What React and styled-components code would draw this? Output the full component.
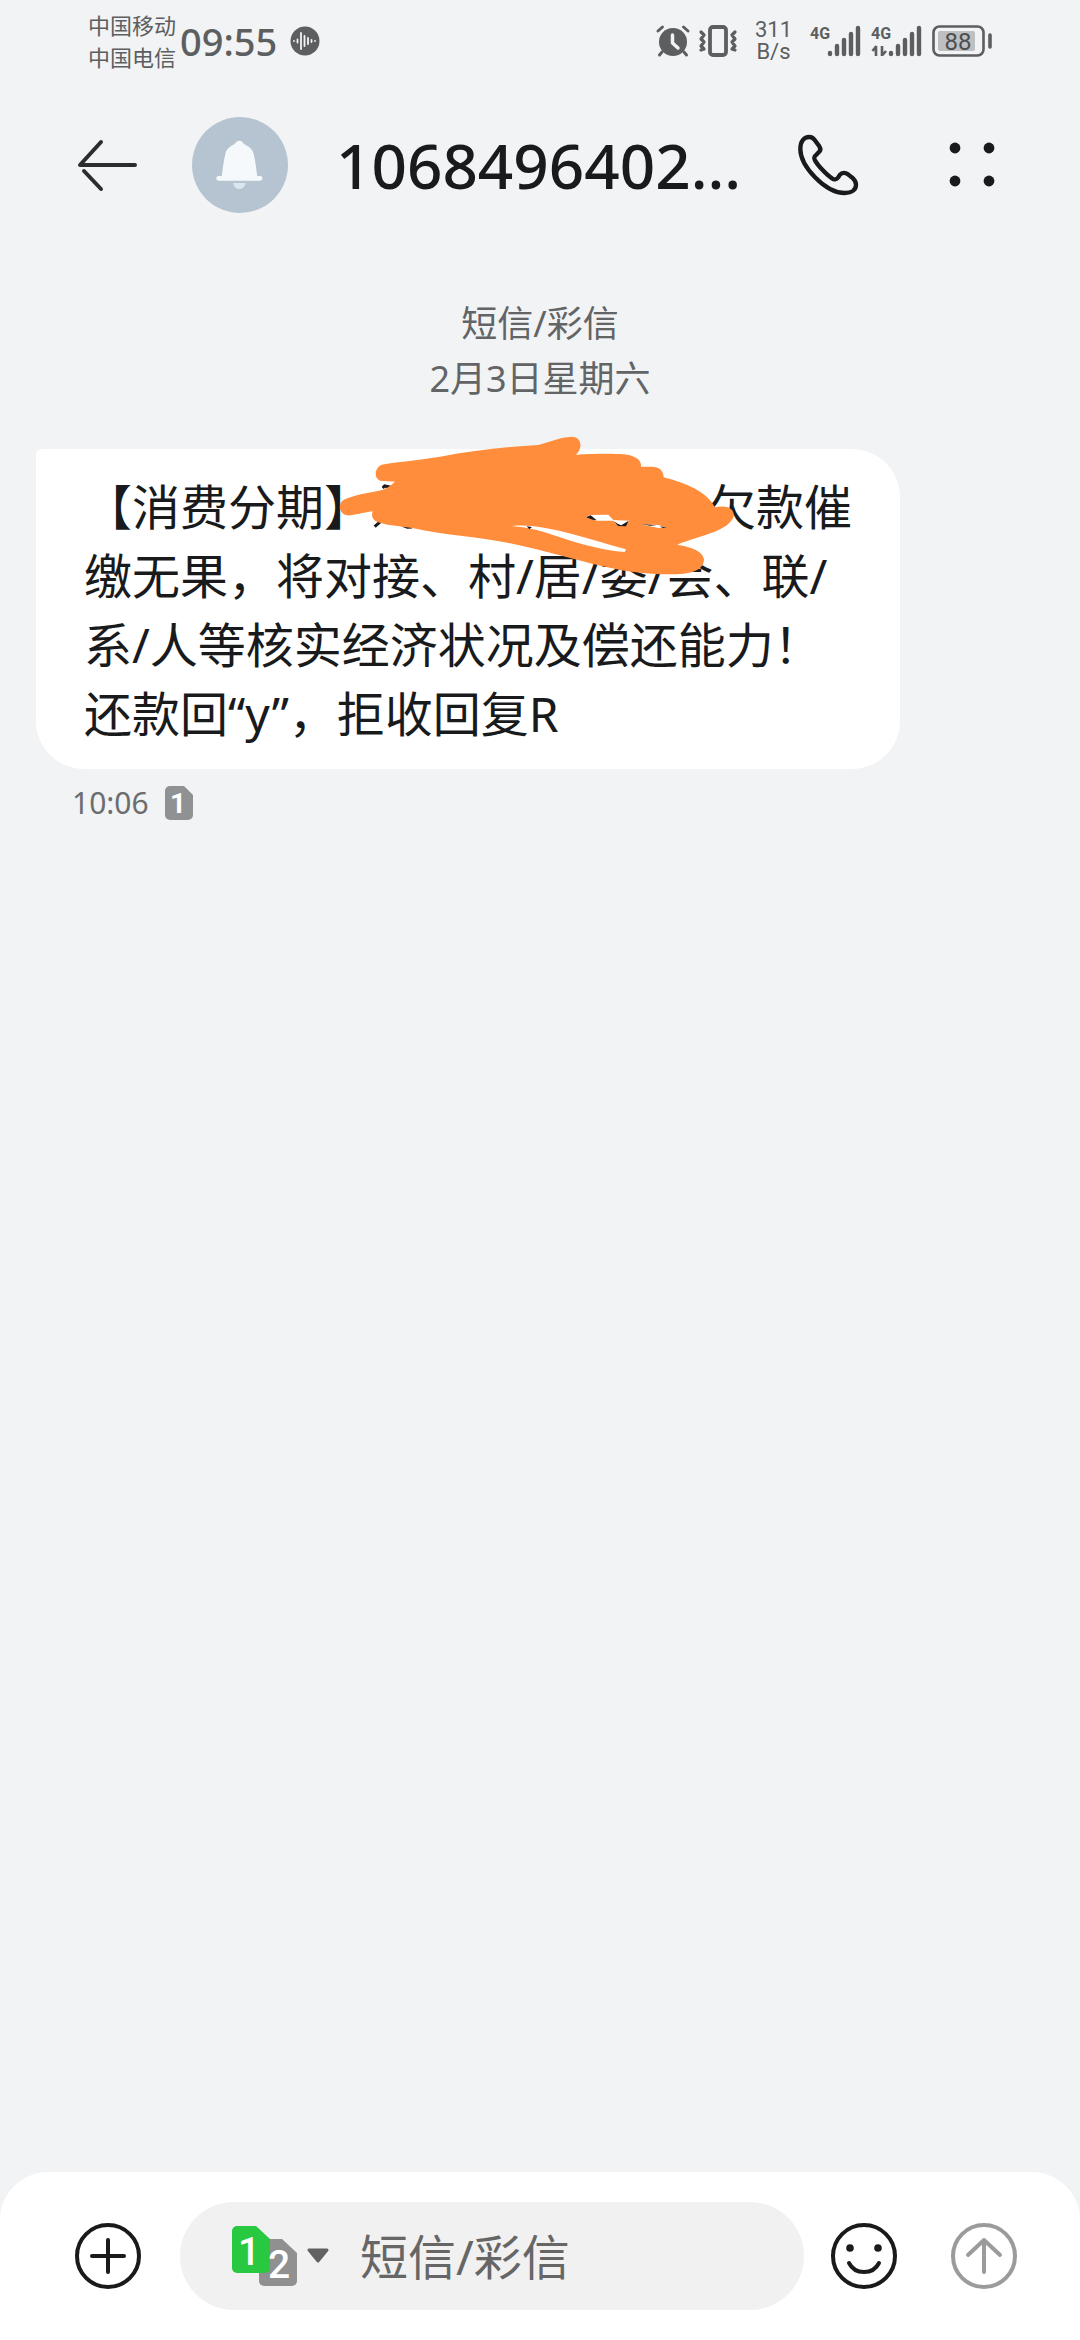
import React from "react";
import styled, { createGlobalStyle } from "styled-components";

const GlobalStyle = createGlobalStyle`
  * {
    box-sizing: border-box;
  }

  body {
    margin: 0;
    background-color: #f1f3f5;
    color: #191a1c;
    font-family: "Noto Sans", "Noto Sans CJK SC", sans-serif;
    text-spacing-trim: space-all;
  }

  svg {
    display: block;
    flex: none;
    overflow: visible;
  }

  button {
    padding: 0;
    border: 0;
    background: none;
    color: inherit;
    cursor: pointer;
  }
`;

const Page = styled.div`
  display: flex;
  flex-direction: column;
  min-height: 100vh;
`;

const StatusBar = styled.div`
  display: flex;
  align-items: center;
  justify-content: space-between;
  padding: 9px 88px;
  color: #5c5e60;
`;

const StatusGroup = styled.div`
  display: flex;
  align-items: center;
  gap: ${(props) => props.$gap}px;
`;

const Carriers = styled.div`
  font-size: 22px;
  line-height: 32px;
`;

const Clock = styled.time`
  margin-right: 9px;
  font-size: 38px;
  font-weight: 500;
  line-height: 48px;
`;

const Speed = styled.div`
  margin: 0 9px;
  font-family: Roboto, sans-serif;
  font-size: 22px;
  line-height: 22px;
  text-align: center;
`;

const Header = styled.header`
  display: flex;
  align-items: center;
  gap: 48px;
  padding: 35px 72px;
`;

const Avatar = styled.div`
  width: 96px;
  height: 96px;
  border-radius: 50%;
  overflow: hidden;
  background-color: #b6c4d1;
`;

const Title = styled.h1`
  flex: 1;
  min-width: 0;
  margin: 0;
  font-size: 62px;
  font-weight: 500;
  line-height: 96px;
  white-space: nowrap;
`;

const HeaderActions = styled.div`
  display: flex;
  gap: 72px;
`;

const Thread = styled.main`
  flex: 1;
  padding: 48px 36px;
`;

const DateLabel = styled.div`
  margin-bottom: 43px;
  color: #626466;
  font-size: 36px;
  line-height: 55px;
  text-align: center;
`;

const Bubble = styled.p`
  width: fit-content;
  max-width: 864px;
  margin: 0;
  padding: 23px 40px 21px 48px;
  border-radius: 6px 48px 48px 48px;
  background-color: #fff;
  font-size: 48px;
  line-height: 69px;
`;

const Redacted = styled.span`
  position: relative;
  display: inline-block;
  width: 7em;
  height: 69px;
  vertical-align: top;

  svg {
    position: absolute;
    top: -52px;
    left: -42px;
  }
`;

const MessageMeta = styled.div`
  display: flex;
  align-items: center;
  gap: 16px;
  padding: 13px 36px;
  color: #6b6d6f;
  font-size: 30px;
  line-height: 42px;
`;

const Composer = styled.form`
  display: flex;
  align-items: center;
  gap: 24px;
  padding: 30px 60px;
  border-radius: 48px 48px 0 0;
  background-color: #fff;
`;

const AttachButton = styled.button`
  margin: 0 12px;
`;

const InputPill = styled.div`
  display: flex;
  flex: 1;
  align-items: center;
  min-width: 0;
  height: 108px;
  padding: 0 51px;
  border-radius: 54px;
  background-color: #f1f1f1;
`;

const SimPicker = styled.button`
  display: flex;
  align-items: center;
  gap: 8px;
  color: #626262;
`;

const MessageInput = styled.input`
  flex: 1;
  min-width: 0;
  height: 72px;
  margin-left: 30px;
  padding: 0;
  border: 0;
  outline: none;
  background: none;
  font: inherit;
  font-size: 48px;

  &::placeholder {
    color: #666;
    opacity: 1;
  }
`;

const SendActions = styled.div`
  display: flex;
  gap: 48px;
`;

const VoiceIcon = () => (
  <svg width="30" height="30" viewBox="0 0 30 30">
    <circle cx="15" cy="15" r="14.5" fill="#5c5e60" />
    <path
      d="M4 15v.1M7.5 13.5v3M11 7v16M14.5 10v10M18 12v6M21.5 14v2M25 15v.1"
      stroke="#f1f3f5"
      strokeWidth="1.8"
      strokeLinecap="round"
    />
  </svg>
);

const AlarmIcon = () => (
  <svg width="34" height="34" viewBox="0 0 34 34">
    <circle cx="17" cy="18" r="14" fill="currentColor" />
    <path
      d="M2 7L6.500 3M32 7L27.500 3M6 28L3.500 31M28 28L30.500 31"
      stroke="currentColor"
      strokeWidth="3"
      strokeLinecap="round"
    />
    <path
      d="M16.500 11v8l5.500 5"
      fill="none"
      stroke="#f1f3f5"
      strokeWidth="3.5"
      strokeLinecap="round"
      strokeLinejoin="round"
    />
  </svg>
);

const VibrateIcon = () => (
  <svg
    width="38"
    height="34"
    viewBox="0 0 38 34"
    fill="none"
    stroke="currentColor"
    strokeLinecap="round"
    strokeLinejoin="round"
  >
    <rect x="11" y="3" width="16" height="28" rx="3" strokeWidth="3.8" />
    <path
      d="M2 8l3 3-3 4 3 3-3 4 3 3-3 1M36 8l-3 3 3 4-3 3 3 4-3 3 3 1"
      strokeWidth="3.2"
    />
  </svg>
);

const SignalIcon = ({ data }) => (
  <svg width="52" height="34" viewBox="0 0 52 34" fill="currentColor">
    <text x="0" y="15" fontFamily="Roboto" fontSize="16" fontWeight="700">
      4G
    </text>
    <path
      d="M20 30v-1M27 30v-8M34 30V16M41 30V10M48 30V4"
      stroke="currentColor"
      strokeWidth="4.400"
      strokeLinecap="round"
    />
    {data && (
      <path
        d="M5 32V22M5.500 22L1.500 27M11 22v10M11 31.500L15 27"
        stroke="currentColor"
        strokeWidth="2.600"
      />
    )}
  </svg>
);

const BatteryIcon = () => (
  <svg width="60" height="34" viewBox="0 0 60 34">
    <rect
      x="1.500"
      y="2.500"
      width="50"
      height="29"
      rx="6"
      fill="none"
      stroke="currentColor"
      strokeWidth="2.600"
    />
    <rect x="6" y="7" width="37" height="20" rx="2" fill="#bdbfc1" />
    <path
      d="M58 11v12"
      stroke="currentColor"
      strokeWidth="3.600"
      strokeLinecap="round"
    />
    <text
      x="26"
      y="26"
      fill="#4c4e50"
      fontFamily="Roboto"
      fontSize="24"
      textAnchor="middle"
    >
      88
    </text>
  </svg>
);

const BackIcon = () => (
  <svg
    width="72"
    height="72"
    viewBox="0 0 72 72"
    fill="none"
    stroke="#2b2c2e"
    strokeWidth="4"
    strokeLinecap="round"
    strokeLinejoin="round"
  >
    <path d="M63 36H8L29 13" />
    <path d="M12 42l17 18" />
  </svg>
);

const BellIcon = () => (
  <svg width="96" height="96" viewBox="0 0 288 288" fill="#f6f9fc">
    <path d="M142 71c-7 0-10 5-15 11-12 6-24 14-27 29-5 20-8 44-11 70h107c-3-26-6-50-11-70-3-15-16-23-28-29-5-6-8-11-15-11z" />
    <rect x="73" y="177" width="138" height="14" rx="7" />
    <path d="M123 198h38c-3 12-10 18-19 18s-16-6-19-18z" fill="#dce6ef" />
  </svg>
);

const PhoneIcon = () => (
  <svg width="72" height="72" viewBox="0 0 216 216">
    <path
      d="M52 24C36 24 25 36 25 60C25 112 100 192 158 192C182 192 192 180 192 167C192 158 188 153 182 147L168 136C160 130 150 130 144 137L138 146C134 152 126 153 120 148C104 138 78 110 69 94C65 86 66 82 73 77L80 70C86 65 86 58 82 52L68 33C63 26 58 24 52 24Z"
      fill="none"
      stroke="currentColor"
      strokeWidth="13"
      strokeLinejoin="round"
    />
  </svg>
);

const MoreIcon = () => (
  <svg width="72" height="72" viewBox="0 0 72 72" fill="currentColor">
    <circle cx="19" cy="19" r="5.400" />
    <circle cx="53" cy="19" r="5.400" />
    <circle cx="19" cy="52" r="5.400" />
    <circle cx="53" cy="52" r="5.400" />
  </svg>
);

const Scribble = () => (
  <svg width="420" height="180" viewBox="0 0 1260 540">
    <path
      d="M158 204l6-6 18 4M134 320l18-16M218 316l14 6 14-1"
      fill="none"
      stroke="#191a1c"
      strokeWidth="9"
    />
    <path
      d="M150 182C132 175 132 145 155 134C200 125 260 122 330 110C430 92 530 80 625 75C660 65 690 52 725 50C748 50 755 70 750 85C748 93 742 100 738 104C790 101 850 100 880 103C915 107 935 118 933 140L965 140C988 140 1000 152 1001 172C1070 190 1130 215 1155 262C1185 255 1213 262 1211 288C1205 310 1180 325 1150 337C1110 352 1070 362 1042 374C1075 380 1118 390 1122 418C1122 445 1095 458 1060 461C1010 466 930 462 860 448C760 428 650 392 540 370C440 350 340 345 250 325C210 317 180 318 150 308C130 303 122 290 128 274C95 278 70 288 50 286C28 280 22 255 40 240C70 225 120 218 158 210C170 205 185 195 195 185Z"
      fill="#ff8d3c"
    />
    <path
      d="M545 318C600 312 650 325 700 335C770 352 830 372 888 388L884 396C820 392 750 372 690 352C640 335 600 322 545 318ZM768 292L780 285L835 284L850 300L898 302L885 318L862 316L850 302L800 302ZM930 313L985 315L1008 322L985 324Z"
      fill="#fff"
    />
    <path
      d="M768 292l14-6 18 15-12-2zM852 304l12 8 10 4 22-14-8 17-24-1zM545 317l30 4zM590 319l16 2-8 7zM930 312l50 4-20 1zM990 319l20 3-12 2z"
      fill="#191a1c"
    />
  </svg>
);

const SimBadge = () => (
  <svg width="28" height="34" viewBox="0 0 28 34">
    <path
      d="M5 0h14l9 9v20a5 5 0 0 1-5 5H5a5 5 0 0 1-5-5V5a5 5 0 0 1 5-5z"
      fill="#8f9193"
    />
    <text
      x="13"
      y="27"
      fill="#fff"
      fontFamily="Roboto"
      fontSize="28"
      fontWeight="700"
      textAnchor="middle"
    >
      1
    </text>
  </svg>
);

const DualSimIcon = () => (
  <svg width="67" height="62" viewBox="0 0 67 62" fontFamily="Roboto">
    <path
      d="M33 14h18l15 14v28a5 5 0 0 1-5 5H33a5 5 0 0 1-5-5V19a5 5 0 0 1 5-5z"
      fill="#909090"
    />
    <path
      d="M6 1h19l14 13v29a5 5 0 0 1-5 5H6a5 5 0 0 1-5-5V6a5 5 0 0 1 5-5z"
      fill="#28c840"
    />
    <g fill="#fff" fontSize="39" fontWeight="500" textAnchor="middle">
      <text x="18" y="40">
        1
      </text>
      <text x="48" y="53">
        2
      </text>
    </g>
  </svg>
);

const CaretIcon = () => (
  <svg width="24" height="18" viewBox="0 0 24 18">
    <path
      d="M3 3h18l-9 11z"
      fill="currentColor"
      stroke="currentColor"
      strokeWidth="3"
      strokeLinejoin="round"
    />
  </svg>
);

const CircleIcon = ({ children }) => (
  <svg
    width="72"
    height="72"
    viewBox="0 0 72 72"
    fill="none"
    stroke="currentColor"
    strokeWidth="4"
    strokeLinecap="round"
    strokeLinejoin="round"
  >
    <circle cx="36" cy="36" r="31" />
    {children}
  </svg>
);

const SendButton = styled.button`
  color: #9b9b9b;
`;

export default function App() {
  return (
    <Page>
      <GlobalStyle />
      <StatusBar>
        <StatusGroup $gap={4}>
          <Carriers>
            <div>中国移动</div>
            <div>中国电信</div>
          </Carriers>
          <Clock>09:55</Clock>
          <VoiceIcon />
        </StatusGroup>
        <StatusGroup $gap={9}>
          <AlarmIcon />
          <VibrateIcon />
          <Speed>
            <div>311</div>
            <div>B/s</div>
          </Speed>
          <SignalIcon />
          <SignalIcon data />
          <BatteryIcon />
        </StatusGroup>
      </StatusBar>

      <Header>
        <button type="button" aria-label="返回">
          <BackIcon />
        </button>
        <Avatar>
          <BellIcon />
        </Avatar>
        <Title>1068496402...</Title>
        <HeaderActions>
          <button type="button" aria-label="拨打电话">
            <PhoneIcon />
          </button>
          <button type="button" aria-label="更多">
            <MoreIcon />
          </button>
        </HeaderActions>
      </Header>

      <Thread>
        <DateLabel>
          <div>短信/彩信</div>
          <div>2月3日星期六</div>
        </DateLabel>
        <Bubble>
          【消费分期】
          <Redacted>
            <Scribble />
          </Redacted>
          欠款催缴无果，将对接、村/居/委/会、联/系/人等核实经济状况及偿还能力！还款回“y”，拒收回复R
        </Bubble>
        <MessageMeta>
          <time>10:06</time>
          <SimBadge />
        </MessageMeta>
      </Thread>

      <Composer onSubmit={(e) => e.preventDefault()}>
        <AttachButton type="button" aria-label="添加">
          <CircleIcon>
            <path d="M20 36h32M36 20v32" />
          </CircleIcon>
        </AttachButton>
        <InputPill>
          <SimPicker type="button" aria-label="选择SIM卡">
            <DualSimIcon />
            <CaretIcon />
          </SimPicker>
          <MessageInput
            type="text"
            placeholder="短信/彩信"
            aria-label="短信/彩信"
          />
        </InputPill>
        <SendActions>
          <button type="button" aria-label="表情">
            <CircleIcon>
              <path d="M21 43c6 12 24 12 30 0" />
              <circle cx="22" cy="28" r="1.800" />
              <circle cx="50" cy="28" r="1.800" />
            </CircleIcon>
          </button>
          <SendButton type="submit" aria-label="发送">
            <CircleIcon>
              <path d="M36 52V20M20 35l16-15 16 15" />
            </CircleIcon>
          </SendButton>
        </SendActions>
      </Composer>
    </Page>
  );
}
